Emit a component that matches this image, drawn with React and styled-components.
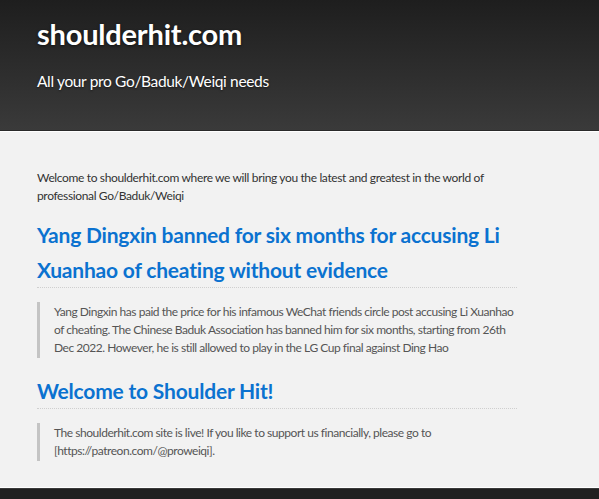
import React from "react";
import styled, { createGlobalStyle } from "styled-components";

const GlobalStyle = createGlobalStyle`
  html, body {
    margin: 0;
    padding: 0;
    background: #f2f2f2;
  }
  body {
    font-family: Lato, "Open Sans", sans-serif;
  }
`;

const posts = [
  {
    title: "Yang Dingxin banned for six months for accusing Li Xuanhao of cheating without evidence",
    body:
      "Yang Dingxin has paid the price for his infamous WeChat friends circle post accusing Li Xuanhao of cheating. The Chinese Baduk Association has banned him for six months, starting from 26th Dec 2022. However, he is still allowed to play in the LG Cup final against Ding Hao",
  },
  {
    title: "Welcome to Shoulder Hit!",
    body:
      "The shoulderhit.com site is live! If you like to support us financially, please go to [https://patreon.com/@proweiqi].",
  },
];

const App = () => {
  return (
    <>
      <GlobalStyle />
      <Page>
        <Header>
          <SiteTitle>shoulderhit.com</SiteTitle>
          <Tagline>All your pro Go/Baduk/Weiqi needs</Tagline>
        </Header>
        <Main>
          <Intro>
            Welcome to shoulderhit.com where we will bring you the latest and greatest in the world of
            professional Go/Baduk/Weiqi
          </Intro>
          {posts.map((post) => (
            <Post key={post.title}>
              <PostTitle>{post.title}</PostTitle>
              <Quote>{post.body}</Quote>
            </Post>
          ))}
        </Main>
        <Footer />
      </Page>
    </>
  );
};

const Page = styled.div`
  display: flex;
  flex-direction: column;
  min-height: 499px;
`;

const Header = styled.header`
  height: 131px;
  box-sizing: border-box;
  padding: 16px 37px 0;
  background: linear-gradient(to bottom, #1e1e1e, #3a3a3a);
  border-bottom: 1px solid #2a2a2a;
  box-shadow: 0 1px 0 #ffffff;
  color: #fff;
`;

const SiteTitle = styled.h1`
  margin: 0;
  font-size: 29px;
  font-weight: 700;
  line-height: 36px;
  letter-spacing: -0.2px;
  text-shadow: 0 1px 3px rgba(0, 0, 0, 0.6);
`;

const Tagline = styled.p`
  margin: 19px 0 0;
  font-size: 15.5px;
  font-weight: 400;
  line-height: 20px;
  letter-spacing: -0.35px;
  text-shadow: 0 1px 2px rgba(0, 0, 0, 0.5);
`;

const Main = styled.main`
  flex: 1;
  padding: 38px 37px 0;
  width: 480px;
  color: #333;
  font-size: 12px;
  line-height: 18px;
  letter-spacing: -0.36px;
`;

const Intro = styled.p`
  margin: 0 0 12px;
`;

const Post = styled.article`
  margin-bottom: 15px;
`;

const PostTitle = styled.h2`
  margin: 0;
  padding-bottom: 0;
  color: #0b72d0;
  font-size: 21px;
  font-weight: 700;
  line-height: 35px;
  letter-spacing: -0.2px;
  border-bottom: 1px dotted #cfcfcf;
`;

const Quote = styled.blockquote`
  margin: 14px 0 0;
  padding: 1px 0 1px 14px;
  border-left: 3px solid #c4c4c4;
  color: #555;
  letter-spacing: -0.46px;
`;

const Footer = styled.footer`
  height: 10px;
  background: #202020;
  border-top: 1px solid #3a3a3a;
  box-shadow: 0 -1px 0 #ffffff;
`;

export default App;
